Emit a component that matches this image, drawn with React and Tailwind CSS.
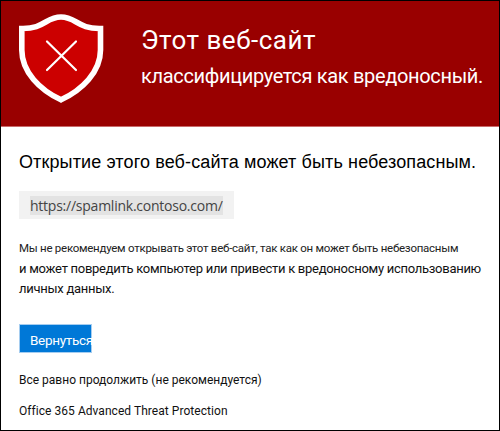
function Shield() {
  return (
    <svg className="ml-[17px] mt-[12px] h-[92px] w-[88px] shrink-0" viewBox="18 13 88 92" fill="none">
      <path
        d="M21.800 28.500C44 29 46 17 61 17S78 29 100.500 28.500V50C100.500 72 82 90 61 99.800C40 90 21.800 72 21.800 50Z"
        fill="#cc0000"
        stroke="#fff"
        strokeWidth="5.600"
      />
      <path d="M47 41.500L76 70M76 41.500L47 70" stroke="#fff" strokeWidth="2.200" strokeLinecap="round" />
    </svg>
  );
}

export default function App() {
  return (
    <main className="flex h-[431px] w-[500px] flex-col overflow-hidden border border-black bg-white font-['Roboto','Liberation_Sans',sans-serif] text-black">
      <header className="flex h-[126px] shrink-0 border-b border-[#c96a6a] bg-[#990000] text-white">
        <Shield />
        <div className="ml-[35px] whitespace-nowrap pt-[23px]">
          <h1 className="h-[36px] text-[26px] leading-[32px] tracking-[0.5px]"><span>Этот веб-сайт</span></h1>
          <p className="mt-px text-[20px] leading-[30px] tracking-[-0.33px]"><span>классифицируется как вредоносный.</span></p>
        </div>
      </header>
      <section className="flex flex-col items-start whitespace-nowrap pl-[18px]">
        <h2 className="mt-[23px] font-['Liberation_Sans',sans-serif] text-[18px] leading-[24px] tracking-[0.12px]"><span>Открытие этого веб-сайта может быть небезопасным.</span></h2>
        <div className="mt-[17px] flex h-[28px] w-[215px] items-center bg-[#f2f2f2] pl-[11px]">
          <span className="bg-[#e3e3e3] font-['Open_Sans',sans-serif] text-[14px] leading-[19px] tracking-[-0.24px] text-[#444]">https://spamlink.contoso.com/</span>
        </div>
        <p className="mt-[19px] text-[11.500px] leading-[20px] tracking-[-0.26px] text-[#222]"><span>Мы не рекомендуем открывать этот веб-сайт, так как он может быть небезопасным</span></p>
        <p className="mt-px text-[13px] leading-[20px] tracking-[-0.28px] text-[#111]"><span>и может повредить компьютер или привести к вредоносному использованию</span></p>
        <p className="text-[13px] leading-[19px] tracking-[-0.28px] text-[#111]"><span>личных данных.</span></p>
        <button className="mt-[26px] h-[29px] w-[73px] border border-[#a5cdf0] bg-[#0078d7] pl-[10px] text-left text-[13.500px] leading-[30px] tracking-[-0.3px] text-white">Вернуться</button>
        <p className="mt-[17px] text-[12px] leading-[20px] text-[#111]"><span>Все равно продолжить (не рекомендуется)</span></p>
        <p className="mt-[11px] text-[12px] leading-[20px] tracking-[0.05px] text-[#111]"><span>Office 365 Advanced Threat Protection</span></p>
      </section>
    </main>
  );
}
